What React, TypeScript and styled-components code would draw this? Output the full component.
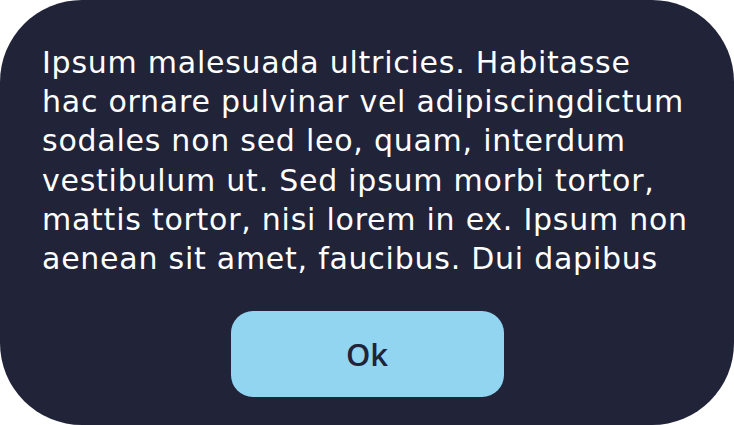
import * as React from "react";
import styled, { createGlobalStyle } from "styled-components";

const GlobalStyle = createGlobalStyle`
    html, body {
        margin: 0;
        padding: 0;
        background: #ffffff;
    }
`;

const Dialog = styled.div`
    box-sizing: border-box;
    width: 734px;
    height: 425px;
    background: #212339;
    border-radius: 82px;
    padding: 43px 42px 28px;
    display: flex;
    flex-direction: column;
    align-items: flex-start;
`;

const Message = styled.p`
    margin: 0;
    color: #ffffff;
    font-family: "DejaVu Sans", sans-serif;
    font-size: 30px;
    letter-spacing: 0.75px;
    line-height: 39.2px;
    white-space: pre-line;
`;

const Actions = styled.div`
    align-self: stretch;
    display: flex;
    justify-content: center;
    margin-top: auto;
`;

const OkButton = styled.button`
    width: 273px;
    height: 86px;
    border: none;
    border-radius: 22px;
    background: #91d5f1;
    color: #212339;
    font-family: "Open Sans", sans-serif;
    font-weight: 600;
    font-size: 31px;
    cursor: pointer;
`;

const lines = [
    "Ipsum malesuada ultricies. Habitasse",
    "hac ornare pulvinar vel adipiscingdictum",
    "sodales non sed leo, quam, interdum",
    "vestibulum ut. Sed ipsum morbi tortor,",
    "mattis tortor, nisi lorem in ex. Ipsum non",
    "aenean sit amet, faucibus. Dui dapibus",
];

export default function App() {
    return (
        <>
            <GlobalStyle />
            <Dialog>
                <Message>{lines.join("\n")}</Message>
                <Actions>
                    <OkButton>Ok</OkButton>
                </Actions>
            </Dialog>
        </>
    );
}
